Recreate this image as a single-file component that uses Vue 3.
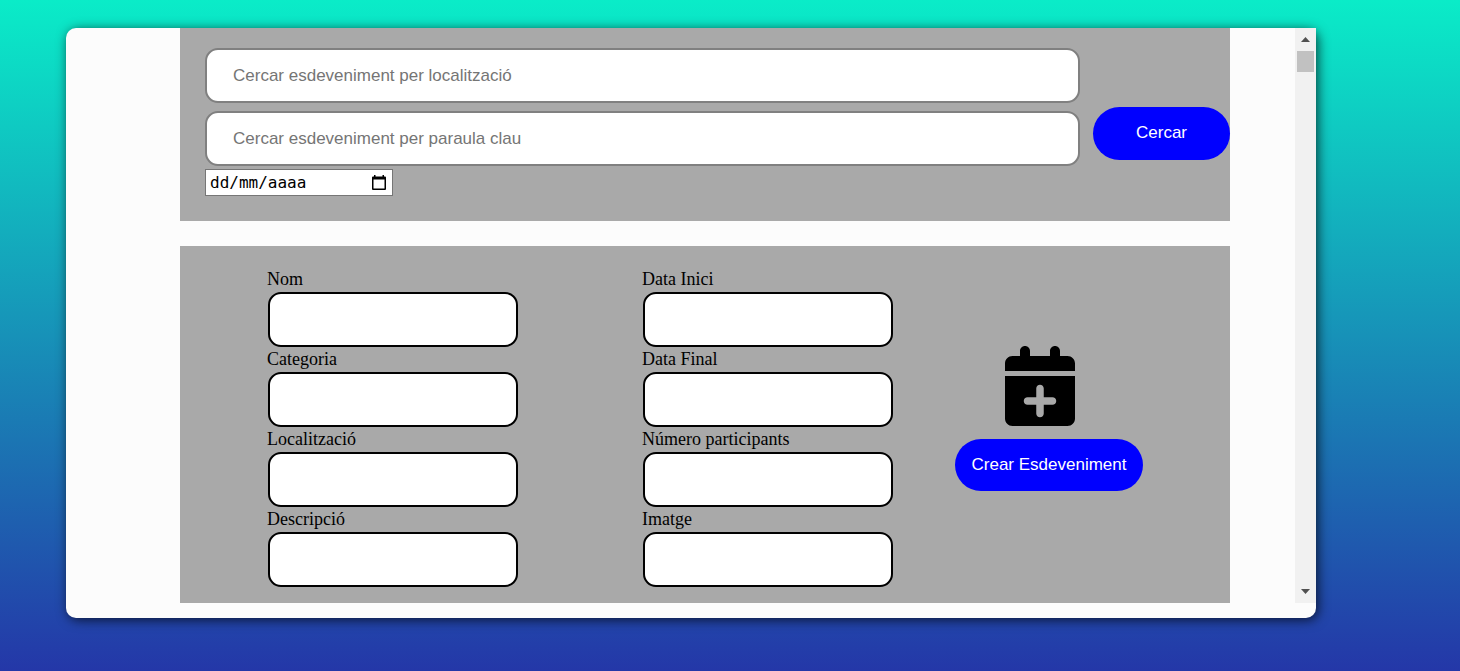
<script setup>
import { ref } from 'vue'

const place = ref('')
const keyword = ref('')
const date = ref('')

const columns = [
  [
    { id: 'nom', label: 'Nom' },
    { id: 'categoria', label: 'Categoria' },
    { id: 'localitzacio', label: 'Localització' },
    { id: 'descripcio', label: 'Descripció' },
  ],
  [
    { id: 'data-inici', label: 'Data Inici' },
    { id: 'data-final', label: 'Data Final' },
    { id: 'participants', label: 'Número participants' },
    { id: 'imatge', label: 'Imatge' },
  ],
]
</script>

<template>
  <div class="page">
    <main class="card">
      <div class="viewport">
        <div class="content">
          <form class="panel search" @submit.prevent>
            <div class="search-fields">
              <input v-model="place" class="search-input" type="text" aria-label="Cercar esdeveniment per localització" placeholder="Cercar esdeveniment per localització" />
              <input v-model="keyword" class="search-input" type="text" aria-label="Cercar esdeveniment per paraula clau" placeholder="Cercar esdeveniment per paraula clau" />
              <div class="date">
                <input v-model="date" class="date-input" type="text" aria-label="Data" placeholder="dd/mm/aaaa" />
                <button class="date-button" type="button" aria-label="Obrir calendari">
                  <svg viewBox="0 0 14 15" width="14" height="15">
                    <path d="M2 0h1.500v1.500h7V0H12v1.500h1a1 1 0 0 1 1 1V14a1 1 0 0 1-1 1H1a1 1 0 0 1-1-1V2.500a1 1 0 0 1 1-1h1zM1.500 4.500v9h11v-9z" />
                  </svg>
                </button>
              </div>
            </div>
            <button class="pill search-button" type="submit">Cercar</button>
          </form>

          <form class="panel create" @submit.prevent>
            <div v-for="(fields, i) in columns" :key="i" class="column">
              <div v-for="field in fields" :key="field.id" class="field">
                <label :for="field.id">{{ field.label }}</label>
                <input :id="field.id" type="text" />
              </div>
            </div>
            <div class="action">
              <svg class="calendar" viewBox="0 0 448 512" aria-hidden="true">
                <path d="M96 32V64H48C21.500 64 0 85.500 0 112v48H448V112c0-26.500-21.500-48-48-48H352V32c0-17.700-14.300-32-32-32s-32 14.300-32 32V64H160V32c0-17.700-14.300-32-32-32S96 14.300 96 32zM448 192H0V464c0 26.500 21.500 48 48 48H400c26.500 0 48-21.500 48-48V192zM224 248c13.300 0 24 10.700 24 24v56h56c13.300 0 24 10.700 24 24s-10.700 24-24 24H248v56c0 13.300-10.700 24-24 24s-24-10.700-24-24V376H144c-13.300 0-24-10.700-24-24s10.700-24 24-24h56V272c0-13.300 10.700-24 24-24z" />
              </svg>
              <button class="pill create-button" type="submit">Crear Esdeveniment</button>
            </div>
          </form>
        </div>
        <div class="scrollbar">
          <button class="scroll-arrow" type="button" aria-label="Amunt">
            <svg viewBox="0 0 9 5" width="9" height="5"><path d="M4.500 0L9 5H0z" /></svg>
          </button>
          <div class="thumb"></div>
          <button class="scroll-arrow scroll-down" type="button" aria-label="Avall">
            <svg viewBox="0 0 9 5" width="9" height="5"><path d="M0 0h9L4.500 5z" /></svg>
          </button>
        </div>
      </div>
    </main>
  </div>
</template>

<style>
body {
  margin: 0;
}
</style>

<style scoped>
* {
  box-sizing: border-box;
}

.page {
  min-height: 100vh;
  padding: 28px 144px 53px 66px;
  background: linear-gradient(#0aecc8, #2437a8);
  font-family: "Liberation Serif", "Times New Roman", serif;
  font-size: 18px;
  color: #000;
}

.card {
  padding-bottom: 15px;
  border-radius: 10px;
  background: #fcfcfc;
  box-shadow: 2px 2px 12px rgba(0, 0, 0, 0.7);
}

.viewport {
  display: flex;
}

.content {
  flex: 1;
  min-width: 0;
  display: flex;
  flex-direction: column;
  gap: 25px;
  padding: 0 65px 0 114px;
}

.panel {
  display: flex;
  background: #a9a9a9;
}

input,
button {
  margin: 0;
  font-family: "Liberation Sans", Arial, sans-serif;
  font-size: 17px;
}

.search {
  align-items: flex-start;
  gap: 13px;
  padding: 20px 0 25px 25px;
}

.search-fields {
  flex: 1;
  min-width: 0;
}

.search-input {
  display: block;
  width: 100%;
  height: 55px;
  margin-bottom: 8px;
  padding: 0 26px;
  border: 2px solid #808080;
  border-radius: 13px;
  background: #fff;
}

.search-input + .date {
  margin-top: -5px;
}

::placeholder {
  color: #757575;
  opacity: 1;
}

.date {
  display: flex;
  align-items: center;
  width: 188px;
  height: 27px;
  padding: 0 6px 0 4px;
  border: 1px solid #767676;
  background: #fff;
}

.date-input {
  flex: 1;
  min-width: 0;
  padding: 0;
  border: 0;
  outline: 0;
  background: transparent;
  font-family: "DejaVu Sans Mono", monospace;
  font-size: 16px;
}

.date-input::placeholder {
  color: #000;
}

.date-button {
  display: flex;
  padding: 0;
  border: 0;
  background: transparent;
}

.pill {
  border: 0;
  border-radius: 27px;
  background: #00f;
  color: #fff;
  cursor: pointer;
}

.search-button {
  width: 137px;
  height: 53px;
  margin-top: 59px;
  padding: 0 0 2px;
}

.create {
  padding: 21px 87px 16px;
}

.column {
  width: 375px;
}

.field label {
  display: block;
  line-height: 25px;
}

.field input {
  display: block;
  width: 250px;
  height: 55px;
  margin-left: 1px;
  padding: 0 26px;
  border: 2px solid #000;
  border-radius: 13px;
  background: #fff;
}

.action {
  margin: 79px 0 0 -62px;
}

.calendar {
  display: block;
  width: 70px;
  height: 80px;
  margin: 0 0 13px 50px;
}

.create-button {
  width: 188px;
  height: 52px;
  padding: 0;
  white-space: nowrap;
}

.scrollbar {
  display: flex;
  flex-direction: column;
  align-items: center;
  width: 21px;
  background: #f1f1f1;
}

.scroll-arrow {
  display: flex;
  align-items: center;
  justify-content: center;
  width: 21px;
  height: 23px;
  padding: 0;
  border: 0;
  background: transparent;
  fill: #505050;
}

.scroll-down {
  margin-top: auto;
}

.thumb {
  width: 17px;
  height: 21px;
  background: #c1c1c1;
}
</style>
